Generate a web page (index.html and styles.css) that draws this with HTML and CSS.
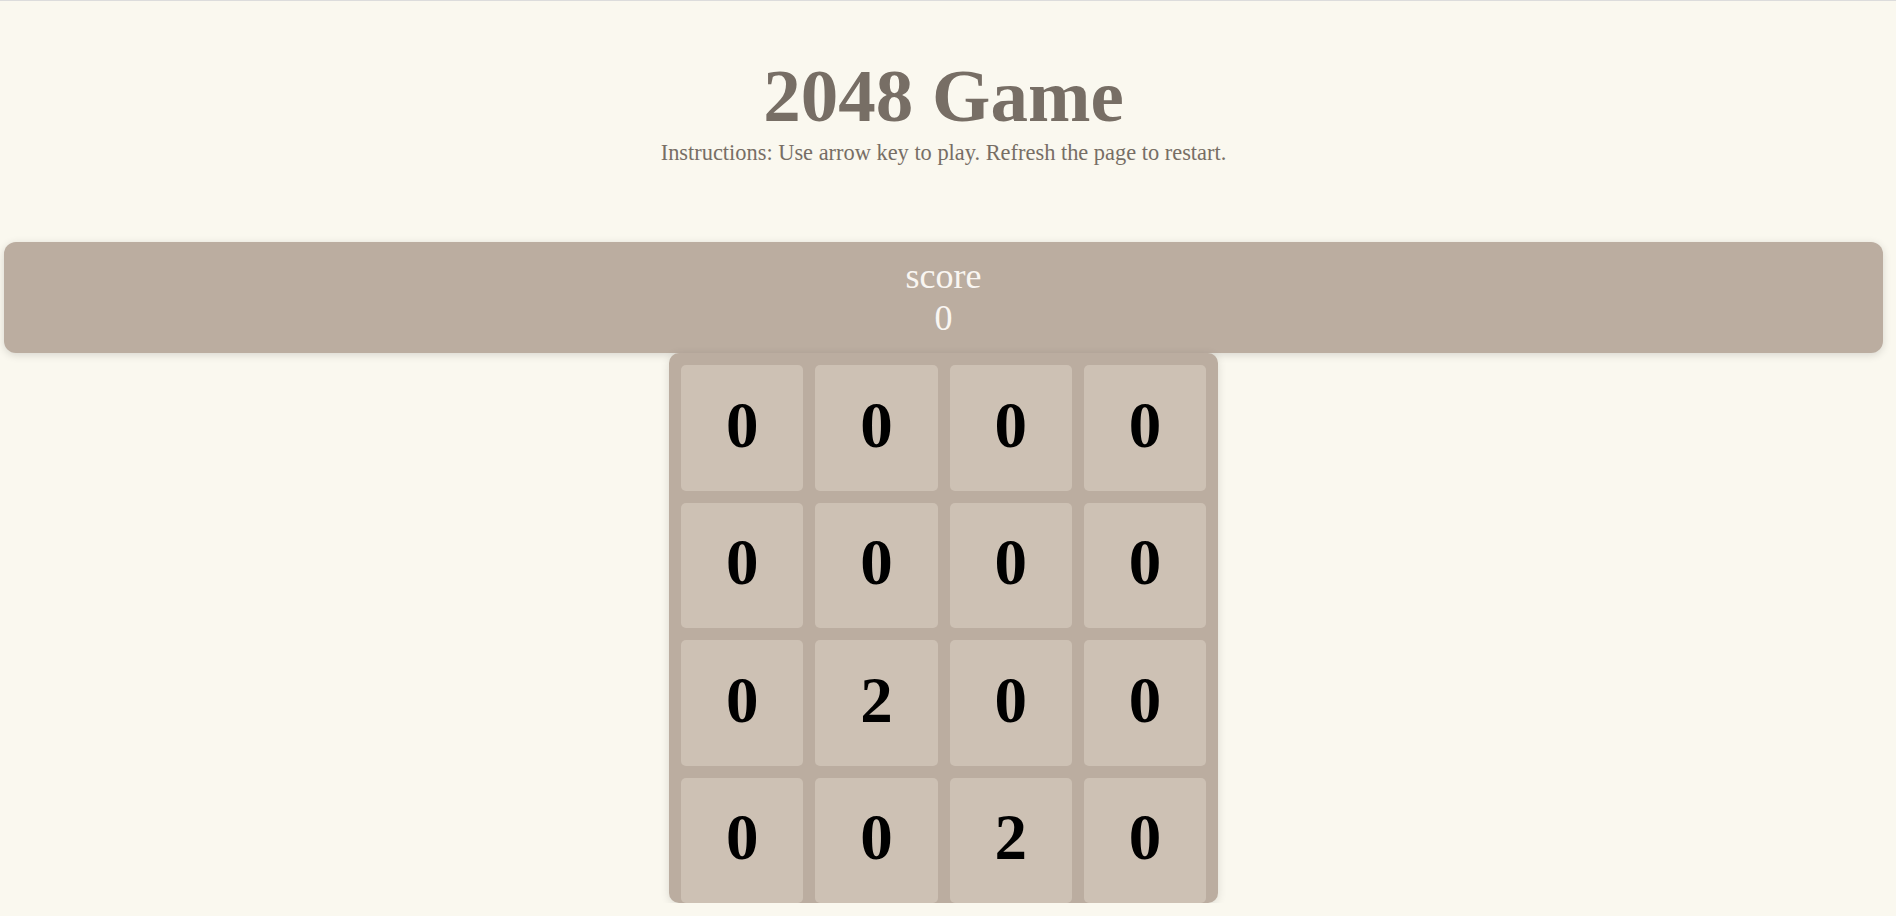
FILE: index.html
```html
<!DOCTYPE html>
<html lang="en">
<head>
<meta charset="utf-8">
<title>2048 Game</title>
<link rel="stylesheet" href="styles.css">
</head>
<body>
<div class="page">
  <div class="column">
    <header class="header">
      <h1 class="title">2048 Game</h1>
      <p class="instructions">Instructions: Use arrow key to play. Refresh the page to restart.</p>
    </header>
    <main class="game">
      <div class="score-bar">
        <div class="score-label">score</div>
        <div class="score-value">0</div>
      </div>
      <div class="board">
        <div class="tile">0</div><div class="tile">0</div><div class="tile">0</div><div class="tile">0</div>
        <div class="tile">0</div><div class="tile">0</div><div class="tile">0</div><div class="tile">0</div>
        <div class="tile">0</div><div class="tile">2</div><div class="tile">0</div><div class="tile">0</div>
        <div class="tile">0</div><div class="tile">0</div><div class="tile">2</div><div class="tile">0</div>
      </div>
    </main>
  </div>
</div>
</body>
</html>
```
FILE: styles.css
```css
html, body {
  margin: 0;
  padding: 0;
  background: #faf8ef;
  font-family: "Liberation Serif", "Times New Roman", serif;
  overflow: hidden;
}

.page {
  border-top: 1px solid #dcdcdc;
}

.column {
  width: 1879px;
  margin-left: 4px;
}

.header {
  padding-top: 52px;
  text-align: center;
  color: #776e65;
}

.title {
  margin: 0;
  font-size: 75px;
  font-weight: bold;
  line-height: normal;
}

.instructions {
  margin: 1px 0 0;
  font-size: 22.4px;
  line-height: normal;
}

.game {
  margin-top: 76px;
}

.score-bar {
  position: relative;
  background: #bbada0;
  border-radius: 12px;
  padding: 13px 0 14px;
  text-align: center;
  color: #f9f6f2;
  font-size: 36px;
  line-height: normal;
  box-shadow: 0 2px 8px rgba(0, 0, 0, 0.14);
}

.board {
  position: relative;
  box-sizing: border-box;
  width: 549px;
  height: 550px;
  margin: 0 auto;
  padding: 12px 12px 0;
  display: grid;
  grid-template-columns: repeat(4, 1fr);
  grid-template-rows: repeat(4, 1fr);
  gap: 12px;
  background: #bbada0;
  border-radius: 10px;
  box-shadow: 0 2px 10px rgba(0, 0, 0, 0.12);
}

.tile {
  display: flex;
  align-items: center;
  justify-content: center;
  padding-bottom: 5px;
  background: #cdc1b4;
  border-radius: 5px;
  font-size: 65px;
  font-weight: bold;
  color: #000;
}
```
